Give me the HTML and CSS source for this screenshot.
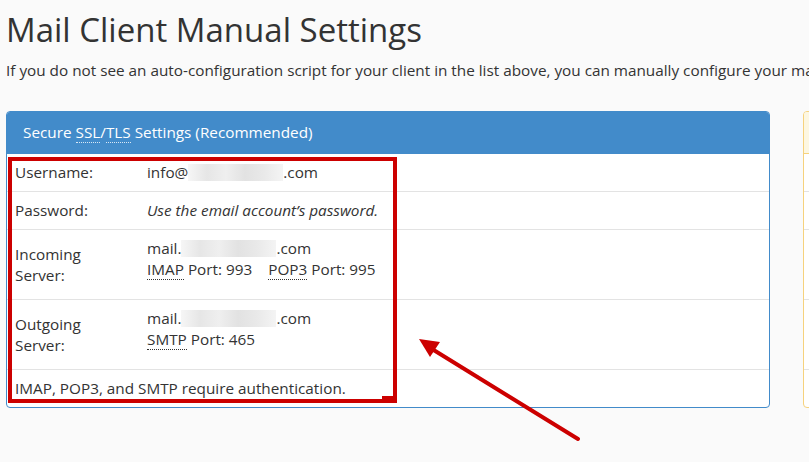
FILE: index.html
```html
<!DOCTYPE html>
<html lang="en">
<head>
<meta charset="utf-8">
<title>Mail Client Manual Settings</title>
<link rel="stylesheet" href="styles.css">
</head>
<body>
<div class="page">
  <h1 class="title">Mail Client Manual Settings</h1>
  <p class="lead">If you do not see an auto-configuration script for your client in the list above, you can manually configure your mail client.</p>
  <div class="panels">
    <div class="panel panel-primary">
      <div class="panel-heading">Secure <abbr title="Secure Sockets Layer">SSL</abbr>/<abbr title="Transport Layer Security">TLS</abbr> Settings (Recommended)</div>
      <table class="settings">
        <tr>
          <td class="label">Username:</td>
          <td class="value">info@<span class="redact r1"></span>.com</td>
        </tr>
        <tr>
          <td class="label">Password:</td>
          <td class="value"><em>Use the email account’s password.</em></td>
        </tr>
        <tr class="tall">
          <td class="label">Incoming<br>Server:</td>
          <td class="value">mail.<span class="redact r2"></span>.com<br><abbr title="Internet Message Access Protocol">IMAP</abbr> Port: 993 <span class="sep"></span><abbr title="Post Office Protocol 3">POP3</abbr> Port: 995</td>
        </tr>
        <tr class="tall">
          <td class="label">Outgoing<br>Server:</td>
          <td class="value">mail.<span class="redact r3"></span>.com<br><abbr title="Simple Mail Transfer Protocol">SMTP</abbr> Port: 465</td>
        </tr>
        <tr>
          <td class="note" colspan="2">IMAP, POP3, and SMTP require authentication.</td>
        </tr>
      </table>
    </div>
    <div class="panel panel-warning">
      <div class="panel-heading">&nbsp;</div>
      <table class="settings">
        <tr><td class="label">&nbsp;</td><td class="value">&nbsp;</td></tr>
        <tr><td class="label">&nbsp;</td><td class="value">&nbsp;</td></tr>
        <tr class="tall"><td class="label">&nbsp;<br>&nbsp;</td><td class="value">&nbsp;<br>&nbsp;</td></tr>
        <tr class="tall"><td class="label">&nbsp;<br>&nbsp;</td><td class="value">&nbsp;<br>&nbsp;</td></tr>
        <tr><td class="note" colspan="2">&nbsp;</td></tr>
      </table>
    </div>
  </div>
</div>
<div class="annot-box"></div>
<div class="annot-jag"></div>
<svg class="annot-arrow" width="809" height="462" viewBox="0 0 809 462" xmlns="http://www.w3.org/2000/svg">
  <line x1="578" y1="439" x2="432" y2="349" stroke="#cc0000" stroke-width="4" stroke-linecap="round"/>
  <polygon points="419,339 440,342 430,357" fill="#cc0000"/>
</svg>
</body>
</html>
```
FILE: styles.css
```css
html, body {
  margin: 0;
  padding: 0;
  overflow: hidden;
  background: #fafafa;
}
body {
  font-family: "Open Sans", "DejaVu Sans", sans-serif;
  font-size: 15.3px;
  line-height: 21px;
  color: #333;
  width: 809px;
  height: 462px;
  position: relative;
}
.page {
  padding: 10px 0 0 6px;
  white-space: nowrap;
}
.title {
  margin: 0;
  font-size: 33px;
  line-height: 40px;
  font-weight: 400;
  color: #333;
}
.lead {
  margin: 10px 0 0 0;
  font-size: 15.3px;
  line-height: 20px;
}
.panels {
  display: flex;
  gap: 33px;
  margin-top: 31px;
}
.panel {
  flex: 0 0 764px;
  box-sizing: border-box;
  border: 1px solid #428bca;
  border-radius: 4px;
  background: #fff;
  overflow: hidden;
}
.panel-heading {
  padding: 10px 15px 11px 16px;
  line-height: 20px;
  background: #428bca;
  color: #fff;
  border-bottom: 1px solid #428bca;
}
.panel-warning {
  border-color: #f6d27d;
}
.panel-warning .panel-heading {
  background: #fdf7e1;
  color: #8a6d3b;
  border-bottom-color: #f6d27d;
}
abbr {
  text-decoration: none;
  border-bottom: 1px dotted currentColor;
}
.panel-heading abbr {
  border-bottom-color: rgba(255,255,255,0.8);
}
.settings {
  width: 100%;
  border-collapse: collapse;
}
.settings td {
  padding: 8px;
  border-top: 1px solid #e3e3e3;
  vertical-align: middle;
}
.settings tr:first-child td {
  border-top: 0;
}
.settings .label {
  width: 116px;
}
.settings .value {
  vertical-align: top;
}
.settings tr.tall .value {
  padding-bottom: 19px;
}
.settings em {
  font-style: italic;
}
.sep {
  display: inline-block;
  width: 12px;
}
.redact {
  display: inline-block;
  height: 17px;
  vertical-align: -3px;
  background: linear-gradient(90deg, #f6f6f6 0%, #e6e6e6 20%, #efefef 40%, #e2e2e2 60%, #e9e9e9 80%, #f4f4f4 100%);
}
.r1 { width: 95px; }
.r2 { width: 95px; }
.r3 { width: 95px; }
.annot-box {
  position: absolute;
  left: 8px;
  top: 157px;
  width: 389px;
  height: 246px;
  box-sizing: border-box;
  border: 4px solid #cc0000;
}
.annot-jag {
  position: absolute;
  left: 382px;
  top: 396px;
  width: 15px;
  height: 7px;
  background: #cc0000;
}
.annot-arrow {
  position: absolute;
  left: 0;
  top: 0;
}
```
